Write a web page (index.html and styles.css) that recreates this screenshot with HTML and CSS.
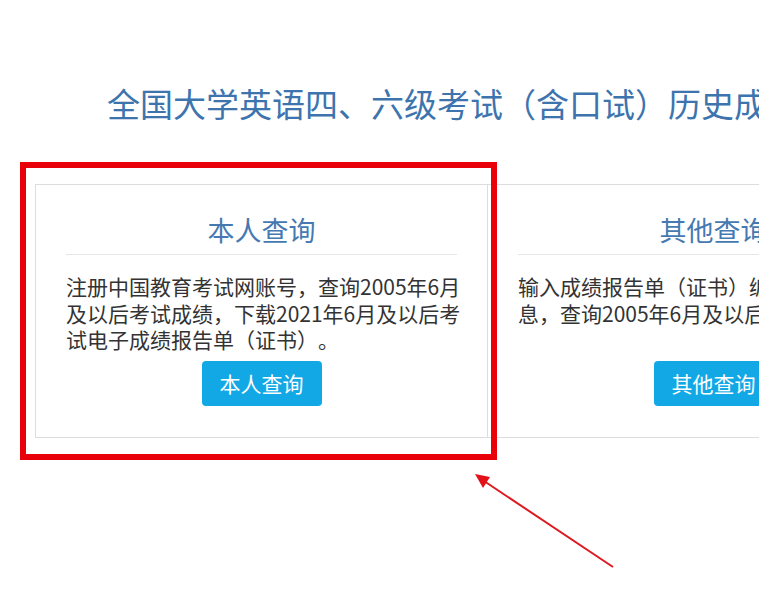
FILE: index.html
```html
<!DOCTYPE html>
<html lang="zh-CN">
<head>
<meta charset="utf-8">
<title>全国大学英语四、六级考试（含口试）历史成绩查询</title>
<link rel="stylesheet" href="styles.css">
</head>
<body>
<div class="page">
  <h1 class="page-title">全国大学英语四、六级考试（含口试）历史成绩查询</h1>
  <div class="cards">
    <div class="card">
      <h2 class="card-title">本人查询</h2>
      <p class="card-text">注册中国教育考试网账号，查询2005年6月及以后考试成绩，下载2021年6月及以后考试电子成绩报告单（证书）。</p>
      <a class="btn" href="#">本人查询</a>
    </div>
    <div class="card card-next">
      <h2 class="card-title">其他查询</h2>
      <p class="card-text">输入成绩报告单（证书）编号和姓名等信息，查询2005年6月及以后考试成绩。</p>
      <a class="btn" href="#">其他查询</a>
    </div>
    <div class="highlight"></div>
  </div>
</div>
<svg class="arrow" width="759" height="589" viewBox="0 0 759 589">
  <line x1="613" y1="567" x2="484" y2="481" stroke="#dc1a1f" stroke-width="2"/>
  <polygon points="475,474 490,477 483,488" fill="#e3121a"/>
</svg>
</body>
</html>
```
FILE: styles.css
```css
html, body {
  margin: 0;
  padding: 0;
}
body {
  width: 759px;
  height: 589px;
  overflow: hidden;
  background: #ffffff;
  font-family: "Noto Sans CJK SC", "Noto Sans", sans-serif;
  text-spacing-trim: space-all;
  position: relative;
}
.page {
  padding-top: 83px;
}
.page-title {
  margin: 0;
  padding-left: 107px;
  font-size: 33px;
  line-height: 40px;
  font-weight: normal;
  color: #3d74ae;
  white-space: nowrap;
}
.cards {
  position: relative;
  display: flex;
  width: max-content;
  margin: 61px 0 0 35px;
}
.card {
  box-sizing: border-box;
  flex-shrink: 0;
  width: 453px;
  height: 254px;
  border: 1px solid #dddddd;
  padding: 27px 30px 31px;
  text-align: center;
}
.card-next {
  margin-left: -1px;
}
.card-title {
  margin: 0;
  font-size: 27px;
  line-height: 36px;
  font-weight: normal;
  color: #4679b2;
  padding-bottom: 6px;
  border-bottom: 1px solid #e6e6e6;
}
.card-text {
  width: 400px;
  height: 80px;
  margin: 18px 0 8px;
  font-size: 21px;
  line-height: 26.5px;
  color: #333333;
  text-align: left;
}
.btn {
  display: inline-block;
  width: 120px;
  height: 45px;
  line-height: 45px;
  border-radius: 4px;
  background: #12a8e6;
  color: #ffffff;
  font-size: 21px;
  text-decoration: none;
}
.highlight {
  position: absolute;
  left: -15px;
  top: -22px;
  width: 477px;
  height: 298px;
  box-sizing: border-box;
  border: 6px solid #e8000b;
  pointer-events: none;
}
.arrow {
  position: absolute;
  left: 0;
  top: 0;
  pointer-events: none;
}
```
